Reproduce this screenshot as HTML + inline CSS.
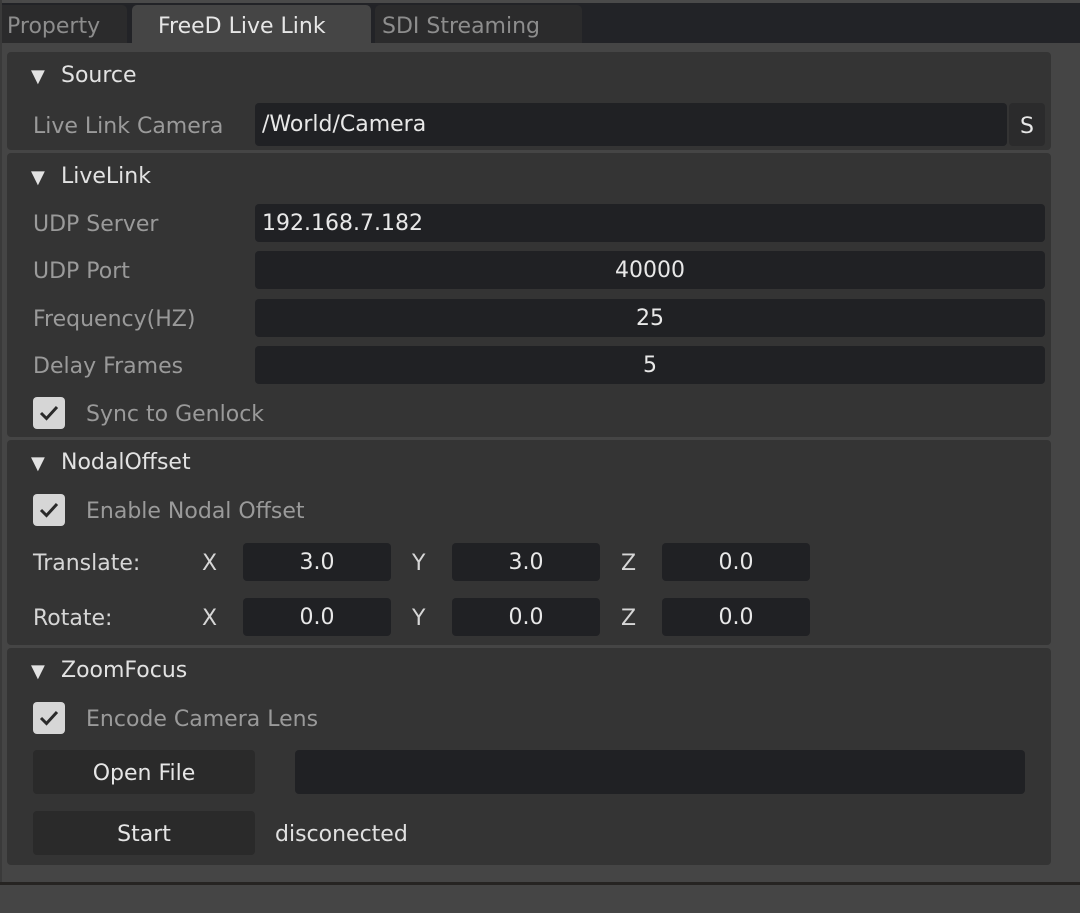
<!DOCTYPE html>
<html><head><meta charset="utf-8"><style>
*{box-sizing:border-box;margin:0;padding:0}
body{width:1080px;height:913px;background:#454545;font-family:"DejaVu Sans","Liberation Sans",sans-serif;font-size:22px;position:relative;overflow:hidden;color:#ddd}
.a{position:absolute}
.t{margin-top:2px}
.top{left:0;top:0;width:1080px;height:43px;background:#222327;border-top:3px solid #4a4a4a}
.tab{top:5px;height:38px;border-radius:5px 5px 0 0;padding:9px 0 0 7px;color:#8d8d8d;background:#2b2b2c}
.panel{left:7px;width:1044px;background:#343434;border-radius:4px}
.in{background:#202124;border-radius:4px;color:#e8e8e8;line-height:40px;text-align:center}
.lbl{color:#9a9a9a}
.hd{color:#e2e2e2}
.tri{font-size:18px;display:inline-block;width:30px}
.cb{width:32px;height:32px;background:#d6d6d6;border-radius:4px}
.cb svg{position:absolute;left:6px;top:7px}
.btn{background:#2a2a2a;border-radius:4px;text-align:center;line-height:48px;color:#e6e6e6}
</style></head><body>
<div class="a top"></div>
<div class="a tab" style="left:0;width:127px;border-radius:0 5px 0 0">Property</div>
<div class="a tab" style="left:132px;width:239px;background:#454545;color:#e6e6e6;padding-left:26px">FreeD Live Link</div>
<div class="a tab" style="left:375px;width:207px">SDI Streaming</div>

<div class="a panel" style="top:52px;height:98px"></div>
<div class="a panel" style="top:153px;height:284px"></div>
<div class="a panel" style="top:440px;height:205px"></div>
<div class="a panel" style="top:648px;height:217px"></div>

<div class="a hd" style="left:31px;top:63px"><span class="tri">▼</span>Source</div>
<div class="a lbl" style="left:33px;top:114px">Live Link Camera</div>
<div class="a in" style="left:255px;top:103px;width:752px;height:43px;text-align:left;padding-left:7px;line-height:44px">/World/Camera</div>
<div class="a in" style="left:1009px;top:103px;width:36px;height:43px;background:#2b2b2c;line-height:48px">S</div>

<div class="a hd" style="left:31px;top:164px"><span class="tri">▼</span>LiveLink</div>
<div class="a lbl" style="left:33px;top:212px">UDP Server</div>
<div class="a in" style="left:255px;top:204px;width:790px;height:38px;text-align:left;padding-left:7px">192.168.7.182</div>
<div class="a lbl" style="left:33px;top:259px">UDP Port</div>
<div class="a in" style="left:255px;top:251px;width:790px;height:38px">40000</div>
<div class="a lbl" style="left:33px;top:307px">Frequency(HZ)</div>
<div class="a in" style="left:255px;top:299px;width:790px;height:38px">25</div>
<div class="a lbl" style="left:33px;top:354px">Delay Frames</div>
<div class="a in" style="left:255px;top:346px;width:790px;height:38px">5</div>
<div class="a cb" style="left:33px;top:397px"><svg width="20" height="18" viewBox="0 0 20 18"><path d="M2 9 L7.5 14.5 L18 3" fill="none" stroke="#2a2a2a" stroke-width="3"/></svg></div>
<div class="a lbl" style="left:86px;top:402px">Sync to Genlock</div>

<div class="a hd" style="left:31px;top:450px"><span class="tri">▼</span>NodalOffset</div>
<div class="a cb" style="left:33px;top:494px"><svg width="20" height="18" viewBox="0 0 20 18"><path d="M2 9 L7.5 14.5 L18 3" fill="none" stroke="#2a2a2a" stroke-width="3"/></svg></div>
<div class="a lbl" style="left:86px;top:499px">Enable Nodal Offset</div>

<div class="a" style="left:33px;top:551px;color:#d6d6d6">Translate:</div>
<div class="a" style="left:202px;top:551px;color:#d6d6d6">X</div>
<div class="a in" style="left:243px;top:543px;width:148px;height:38px">3.0</div>
<div class="a" style="left:412px;top:551px;color:#d6d6d6">Y</div>
<div class="a in" style="left:452px;top:543px;width:148px;height:38px">3.0</div>
<div class="a" style="left:621px;top:551px;color:#d6d6d6">Z</div>
<div class="a in" style="left:662px;top:543px;width:148px;height:38px">0.0</div>

<div class="a" style="left:33px;top:606px;color:#d6d6d6">Rotate:</div>
<div class="a" style="left:202px;top:606px;color:#d6d6d6">X</div>
<div class="a in" style="left:243px;top:598px;width:148px;height:38px">0.0</div>
<div class="a" style="left:412px;top:606px;color:#d6d6d6">Y</div>
<div class="a in" style="left:452px;top:598px;width:148px;height:38px">0.0</div>
<div class="a" style="left:621px;top:606px;color:#d6d6d6">Z</div>
<div class="a in" style="left:662px;top:598px;width:148px;height:38px">0.0</div>

<div class="a hd" style="left:31px;top:658px"><span class="tri">▼</span>ZoomFocus</div>
<div class="a cb" style="left:33px;top:702px"><svg width="20" height="18" viewBox="0 0 20 18"><path d="M2 9 L7.5 14.5 L18 3" fill="none" stroke="#2a2a2a" stroke-width="3"/></svg></div>
<div class="a lbl" style="left:86px;top:707px">Encode Camera Lens</div>
<div class="a btn" style="left:33px;top:750px;width:222px;height:44px">Open File</div>
<div class="a in" style="left:295px;top:750px;width:730px;height:44px"></div>
<div class="a btn" style="left:33px;top:811px;width:222px;height:44px">Start</div>
<div class="a" style="left:275px;top:822px;color:#e0e0e0">disconected</div>

<div class="a" style="left:0;top:882px;width:1080px;height:3px;background:#262422"></div>
<div class="a" style="left:0;top:0;width:2px;height:882px;background:#3a3a3a"></div>
</body></html>
